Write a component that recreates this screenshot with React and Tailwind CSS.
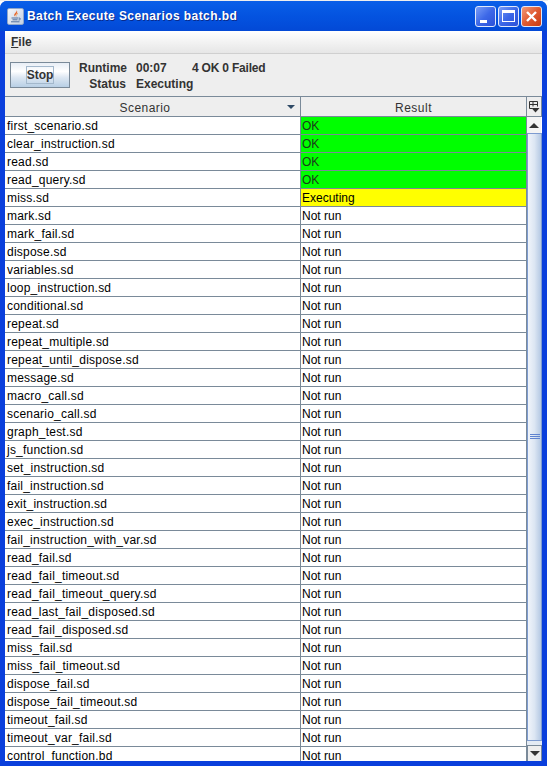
const scenarios = [
  'first_scenario.sd', 'clear_instruction.sd', 'read.sd', 'read_query.sd', 'miss.sd', 'mark.sd', 'mark_fail.sd',
  'dispose.sd', 'variables.sd', 'loop_instruction.sd', 'conditional.sd', 'repeat.sd', 'repeat_multiple.sd',
  'repeat_until_dispose.sd', 'message.sd', 'macro_call.sd', 'scenario_call.sd', 'graph_test.sd', 'js_function.sd',
  'set_instruction.sd', 'fail_instruction.sd', 'exit_instruction.sd', 'exec_instruction.sd',
  'fail_instruction_with_var.sd', 'read_fail.sd', 'read_fail_timeout.sd', 'read_fail_timeout_query.sd',
  'read_last_fail_disposed.sd', 'read_fail_disposed.sd', 'miss_fail.sd', 'miss_fail_timeout.sd', 'dispose_fail.sd',
  'dispose_fail_timeout.sd', 'timeout_fail.sd', 'timeout_var_fail.sd', 'control_function.bd',
]

function Result({ index }) {
  if (index < 4) return <div className="h-[17px] w-[225px] bg-[#00ff00] pl-[1px] leading-[18px] text-[#1c3a1c]">OK</div>
  if (index === 4) return <div className="h-[17px] w-[225px] bg-[#ffff00] pl-[1px] leading-[18px]">Executing</div>
  return <div className="h-[17px] w-[225px] bg-white pl-[1px] leading-[18px]">Not run</div>
}

function WinButton({ className, children }) {
  return (
    <div className={`flex h-[21px] w-[21px] items-center justify-center rounded-[3px] border border-[#dfe8fb] ${className}`}>
      {children}
    </div>
  )
}

export default function App() {
  return (
    <div className="h-[766px] w-[548px] overflow-hidden bg-white font-['Liberation_Sans',sans-serif] text-[12px] text-black">
      <div className="h-[1px] bg-[#eeeeee]" />
      <div className="flex h-[765px] w-[547px] flex-col overflow-hidden rounded-t-[7px] bg-[#0a3fdc] px-[5px] pb-[5px]">
        {/* title bar */}
        <div className="-mx-[5px] flex h-[30px] shrink-0 items-center bg-gradient-to-b from-[#0a5fe8] via-[#0453e0] to-[#0349d6] px-[5px] pl-[7px]">
          <div className="flex h-[17px] w-[17px] items-center justify-center rounded-[2px] border border-[#8fa6c9] bg-gradient-to-br from-[#f4f6fa] to-[#c3d0e2]">
            <svg width="13" height="14" viewBox="0 0 13 14" fill="none">
              <path d="M7.5 .5c1.5 2.5-3.5 3.5-2 7 .8-1.8 4.2-3 2-7z" fill="#e8662a" />
              <path d="M8.5 4c.3 1.5-2 2-1.3 3.5" stroke="#f0a060" />
              <path d="M2.5 9h7M3.5 10.8h5M2 12.8h8.5M10 9c2 0 2 2-.5 2" stroke="#50709f" />
            </svg>
          </div>
          <div className="ml-[3px] flex-1 text-[12px] font-bold tracking-[0.42px] text-white [text-shadow:1px_1px_0_#0a2a8a]">
            Batch Execute Scenarios batch.bd
          </div>
          <div className="flex gap-[2px]">
            <WinButton className="bg-gradient-to-br from-[#7a9cf6] via-[#3d68e8] to-[#2a50d8]">
              <div className="mt-[10px] mr-[5px] h-[3px] w-[7px] bg-white" />
            </WinButton>
            <WinButton className="bg-gradient-to-br from-[#7a9cf6] via-[#3d68e8] to-[#2a50d8]">
              <div className="h-[12px] w-[13px] border border-t-[3px] border-white" />
            </WinButton>
            <WinButton className="bg-gradient-to-br from-[#f09878] via-[#e05a30] to-[#c93a10]">
              <svg width="13" height="13" viewBox="0 0 13 13">
                <path d="M2 2l9 9M11 2l-9 9" stroke="white" strokeWidth="2.4" />
              </svg>
            </WinButton>
          </div>
        </div>

        {/* menu bar */}
        <div className="flex h-[23px] shrink-0 items-center border-b border-[#cfcfcf] bg-gradient-to-b from-white to-[#e6e6e6] pl-[6px]">
          <span className="text-[12px] font-bold text-[#333]">
            <span className="underline">F</span>ile
          </span>
        </div>

        {/* toolbar */}
        <div className="flex h-[42px] shrink-0 items-start bg-[#eeeeee] pl-[5px] pt-[8px]">
          <button className="flex h-[26px] w-[60px] items-center justify-center border border-[#7a8a99] bg-[linear-gradient(#e8eef6,#ffffff_35%,#dde7f2_60%,#b8cfe5)]">
            <span className="flex h-[18px] w-[28px] items-center justify-center border border-[#a3b8cc] text-[12px] font-bold text-[#333]">Stop</span>
          </button>
          <div className="-mt-[2px] ml-[9px] grid grid-cols-[47px_auto] gap-x-[10px] text-[12px] font-bold leading-[16px] text-[#333]">
            <div className="text-right">Runtime</div>
            <div className="flex">
              <span className="w-[56px]">00:07</span>
              <span className="tracking-[-0.2px]">4 OK 0 Failed</span>
            </div>
            <div className="text-right">Status</div>
            <div>Executing</div>
          </div>
        </div>

        {/* table */}
        <div className="flex min-h-0 flex-1 flex-col bg-white">
          <div className="flex h-[21px] shrink-0 border-y border-[#7a8a99] bg-[#eeeeee] text-[#333]">
            <div className="relative flex w-[296px] items-center justify-center border-r border-[#7a8a99] pt-[2px] pr-[15px] tracking-[0.45px]">
              Scenario
              <div className="absolute right-[5px] top-[8px] h-0 w-0 border-x-[4px] border-t-[4px] border-x-transparent border-t-[#2f4a66]" />
            </div>
            <div className="flex w-[225px] items-center justify-center pt-[2px] tracking-[0.5px]">Result</div>
            <div className="flex w-[16px] items-center justify-center border-x border-[#7a8a99]">
              <svg className="shrink-0" width="12" height="13" viewBox="0 0 12 13" fill="none" stroke="#333">
                <path d="M1.5 1.5h8v5M1.5 1.5v7h2.5M1.5 4.5h8M5 1.5v5" />
                <path d="M3.5 8h8l-4 4.5z" fill="#333" stroke="none" />
              </svg>
            </div>
          </div>
          <div className="flex min-h-0 flex-1">
            <div className="min-h-0 w-[521px] overflow-hidden">
              {scenarios.map((name, i) => (
                <div key={name} className="flex h-[18px] gap-[1px] border-b border-[#7a8a99] bg-[#7a8a99]">
                  <div className="h-[17px] w-[295px] bg-white pl-[2px] leading-[18px] tracking-[0.22px]">{name}</div>
                  <Result index={i} />
                </div>
              ))}
            </div>
            <div className="flex w-[16px] flex-col border-l border-[#7a8a99] bg-[#eeeeee]">
              <div className="flex h-[16px] shrink-0 items-center justify-center border-r border-[#ffffff] bg-[#f4f4f4]">
                <div className="h-0 w-0 border-x-[5px] border-b-[5px] border-x-transparent border-b-[#333]" />
              </div>
              <div className="relative flex-1 border-x border-t border-[#7d9bd0] bg-gradient-to-r from-[#f0f4fa] via-[#dce6f3] to-[#b4c8e3]">
                <div className="absolute left-[2px] right-[1px] top-[300px] flex flex-col gap-[1px]">
                  <div className="h-[1px] bg-[#5f83d0]" />
                  <div className="h-[1px] bg-[#5f83d0]" />
                  <div className="h-[1px] bg-[#5f83d0]" />
                </div>
              </div>
              <div className="h-[5px] shrink-0 border-t border-[#7d9bd0] bg-[#e4ebf4]" />
              <div className="flex h-[16px] shrink-0 items-center justify-center border-x border-t border-[#7a8a99] bg-[#eeeeee]">
                <div className="h-0 w-0 border-x-[5px] border-t-[5px] border-x-transparent border-t-[#333]" />
              </div>
            </div>
          </div>
        </div>
      </div>
    </div>
  )
}
